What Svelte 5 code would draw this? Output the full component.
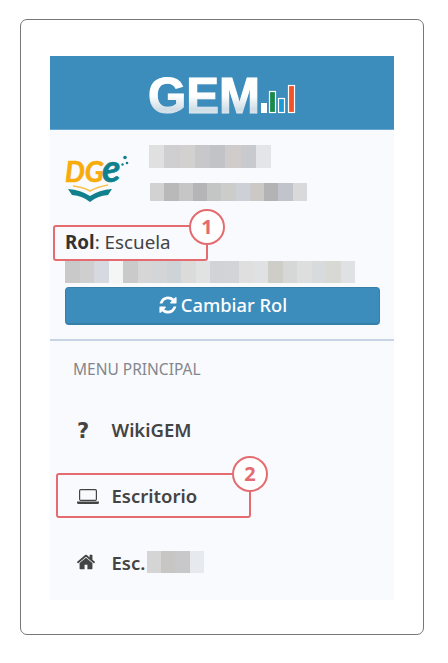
<script lang="ts">
  const nameBlocks = ['#e0e0e0', '#cfcfd1', '#d3d0d0', '#c8c8ca', '#c2c3c7', '#d0cccb', '#c9cacd', '#e4e5e9'];
  const mailBlocks = ['#d2d2d2', '#b9b9b9', '#c6c6c6', '#b5b5b8', '#c4c6c5', '#cccccb', '#cdd0d6', '#cbc9c5', '#b3b2b4', '#c2c4cc', '#d9d9db'];
  const schoolBlocks = ['#c9c9c9', '#cfcfcf', '#d6dae0', '#f4f5f5', '#c9cac9', '#d6d6d6', '#d3d5d6', '#cdd3d6', '#dbdcda', '#e1e2e2', '#d2d3d6', '#d3d4d8', '#dfdfe0', '#e0e1e2', '#cfcdc8', '#d6d8d8', '#dddfdf', '#d8dbdb', '#d8d8d4', '#e0e1e3'];
  const escBlocks = ['#d5d5d5', '#c8c5c5', '#c8c8ca', '#e6e9ed'];
</script>

{#snippet mosaic(blocks: string[], cls: string)}
  <div class="mosaic {cls}" aria-hidden="true">
    {#each blocks as color}
      <span style="background:{color}"></span>
    {/each}
  </div>
{/snippet}

<div class="frame">
  <aside class="panel">
    <header class="brand">
      <svg width="150" height="50" viewBox="0 0 150 50" role="img" aria-label="GEM">
        <defs>
          <linearGradient id="gem" x1="0" y1="0" x2="0" y2="1">
            <stop offset="0" stop-color="#ffffff" />
            <stop offset="0.5" stop-color="#ffffff" />
            <stop offset="0.75" stop-color="#cfdde6" />
            <stop offset="1" stop-color="#f6f9fb" />
          </linearGradient>
        </defs>
        <text x="1" y="42.500" class="gem" fill="url(#gem)" stroke="url(#gem)" stroke-width="1.200" textLength="112" lengthAdjust="spacingAndGlyphs">GEM</text>
        <rect x="114" y="33" width="6" height="10" fill="#fff" />
        <rect x="122.500" y="21.500" width="6" height="21" fill="#1a8a4a" stroke="#fff" stroke-width="1.200" />
        <rect x="131.500" y="28.500" width="6" height="14" fill="#1b9ad6" stroke="#fff" stroke-width="1.200" />
        <rect x="141.500" y="15.500" width="6" height="27" fill="#f0522a" stroke="#fff" stroke-width="1.200" />
      </svg>
    </header>

    <section class="user">
      <div class="identity">
        <svg class="dge" width="64" height="52" viewBox="0 0 64 52" role="img" aria-label="DGE">
          <text x="0" y="27" class="dge-text" fill="#f7ac0c" stroke="#f7ac0c" stroke-width="0.6">DG</text>
          <text x="37" y="27" class="dge-e" fill="#10808c" stroke="#10808c" stroke-width="0.6">e</text>
          <circle cx="60" cy="2.500" r="1.800" fill="#10808c" />
          <circle cx="62" cy="8" r="1.300" fill="#10808c" />
          <circle cx="57.500" cy="9.500" r="1.200" fill="#10808c" />
          <path d="M8 31 Q18 32 25 36 Q32 32 43 30" fill="none" stroke="#f7c14a" stroke-width="1.600" />
          <path d="M3 34 Q16 35 25 41 Q34 35 47 34 L43 40 Q32 41 25 47 Q18 41 7 40 Z" fill="#10808c" />
        </svg>
        <div class="names">
          {@render mosaic(nameBlocks, 'name')}
          {@render mosaic(mailBlocks, 'mail')}
        </div>
      </div>

      <div class="role">
        <b>Rol</b>: Escuela
        <span class="callout role-callout"></span>
        <span class="badge role-badge">1</span>
      </div>
      {@render mosaic(schoolBlocks, 'school')}

      <button type="button" class="switch">
        <svg width="20" height="20" viewBox="0 0 1792 1792" aria-hidden="true">
          <path fill="currentColor" d="M1639 1056q0 5-1 7-64 268-268 434.5t-478 166.5q-146 0-282.5-55t-243.5-157l-129 129q-19 19-45 19t-45-19-19-45v-448q0-26 19-45t45-19h448q26 0 45 19t19 45-19 45l-137 137q71 66 161 102t187 36q134 0 250-65t186-179q11-17 53-117 8-23 30-23h192q13 0 22.5 9.5t9.5 22.5zm25-800v448q0 26-19 45t-45 19h-448q-26 0-45-19t-19-45 19-45l138-138q-148-137-349-137-134 0-250 65t-186 179q-11 17-53 117-8 23-30 23h-199q-13 0-22.5-9.5t-9.5-22.5v-7q65-268 270-434.5t480-166.5q146 0 284 55.5t245 156.5l130-129q19-19 45-19t45 19 19 45z" />
        </svg>
        Cambiar Rol
      </button>
    </section>

    <nav class="menu">
      <div class="menu-title">MENU PRINCIPAL</div>
      <div class="item">
        <span class="icon question">?</span>
        <span>WikiGEM</span>
      </div>
      <div class="item">
        <span class="icon">
          <svg width="24" height="18" viewBox="0 0 24 18" aria-hidden="true">
            <rect x="3.600" y="2.600" width="16.800" height="10.800" rx="1.200" fill="none" stroke="currentColor" stroke-width="1.200" />
            <path fill="currentColor" d="M1 14.500h22v1.200q0 1.300-1.600 1.300H2.600Q1 17 1 15.700z" />
          </svg>
        </span>
        <span>Escritorio</span>
        <span class="callout desk-callout"></span>
        <span class="badge desk-badge">2</span>
      </div>
      <div class="item">
        <span class="icon">
          <svg width="20" height="20" viewBox="0 0 1792 1792" aria-hidden="true">
            <path fill="currentColor" d="M1472 992v480q0 26-19 45t-45 19h-384v-384h-256v384h-384q-26 0-45-19t-19-45v-480q0-1 .5-3t.5-3l575-474 575 474q1 2 1 6zm223-69l-62 74q-8 9-21 11h-3q-13 0-21-7l-692-577-692 577q-12 8-24 7-13-2-21-11l-62-74q-8-10-7-23.5t11-21.5l719-599q32-26 76-26t76 26l244 204v-195q0-14 9-23t23-9h192q14 0 23 9t9 23v408l219 182q10 8 11 21.5t-7 23.5z" />
          </svg>
        </span>
        <span>Esc.</span>
        {@render mosaic(escBlocks, 'esc')}
      </div>
    </nav>
  </aside>
</div>

<style>
  :global(body) {
    background: #fff;
    font-family: "Noto Sans", "Open Sans", sans-serif;
    color: #444;
  }
  .frame {
    box-sizing: border-box;
    width: 404px;
    height: 616px;
    margin: 19px 0 0 20px;
    padding: 36px 29px 0;
    border: 1px solid #777;
    border-radius: 7px;
  }
  .panel {
    width: 344px;
    height: 544px;
    background: #f9fafd;
  }
  .brand {
    box-sizing: border-box;
    height: 74px;
    display: flex;
    justify-content: center;
    align-items: flex-start;
    background: #3c8dbc;
    border-bottom: 1px solid #68a7d0;
  }
  .brand svg {
    margin-top: 14px;
    overflow: visible;
  }
  .gem {
    font: 700 50px "Liberation Sans", sans-serif;
  }
  .user {
    padding: 19px 14px 0 15px;
    height: 211px;
    box-sizing: border-box;
    border-bottom: 2px solid #c7d4e4;
  }
  .identity {
    display: flex;
    height: 57px;
  }
  .dge {
    margin-top: 6px;
    flex: none;
    overflow: visible;
  }
  .dge-text {
    font: 700 italic 28px "Lato", sans-serif;
  }
  .dge-e {
    font: 700 italic 38px "Lato", sans-serif;
  }
  .names {
    margin-left: 20px;
    flex: 1;
  }
  .mosaic {
    display: flex;
  }
  .mosaic span {
    flex: 1;
  }
  .name {
    width: 122px;
    height: 23px;
    margin-top: -4px;
  }
  .mail {
    width: 157px;
    height: 18px;
    margin: 15px 0 0 1px;
  }
  .role {
    position: relative;
    height: 30px;
    margin-top: 22px;
    line-height: 28px;
    font-size: 18.800px;
  }
  .role b {
    color: #333;
  }
  .school {
    width: 290px;
    height: 22px;
    margin-top: 3px;
  }
  .switch {
    width: 315px;
    height: 38px;
    margin-top: 4px;
    padding: 0 0 2px;
    display: flex;
    align-items: center;
    justify-content: center;
    gap: 3px;
    background: #3c8dbc;
    border: 1px solid #367fa9;
    border-bottom-width: 2px;
    border-radius: 4px;
    color: #fff;
    font: 500 18.300px "Noto Sans", sans-serif;
  }
  .menu-title {
    padding: 17px 0 0 23px;
    height: 56px;
    box-sizing: border-box;
    font-size: 15.500px;
    line-height: 22px;
    color: #83878c;
  }
  .item {
    position: relative;
    box-sizing: border-box;
    display: flex;
    align-items: center;
    height: 66.500px;
    padding: 0 0 2px 26px;
    font-size: 18.500px;
    font-weight: 600;
    color: #444;
  }
  .icon {
    width: 35.500px;
    display: flex;
    align-items: center;
    flex: none;
  }
  .question {
    box-sizing: border-box;
    font: 700 21px "DejaVu Sans", sans-serif;
    padding: 3px 0 0 1px;
  }
  .esc {
    width: 57px;
    height: 22px;
    margin-left: 1.500px;
  }
  .callout {
    position: absolute;
    box-sizing: border-box;
    border: 2px solid #e46c70;
    border-radius: 3px;
  }
  .badge {
    position: absolute;
    box-sizing: border-box;
    width: 36px;
    height: 36px;
    border: 2px solid #e46c70;
    border-radius: 50%;
    background: #fff;
    color: #e46c70;
    font: 700 20px/32px "Noto Sans", sans-serif;
    text-align: center;
  }
  .role-callout {
    left: -12px;
    top: -3px;
    width: 155px;
    height: 36px;
  }
  .role-badge {
    left: 124px;
    top: -19px;
  }
  .desk-callout {
    left: 6px;
    top: 9px;
    width: 195px;
    height: 45px;
  }
  .desk-badge {
    left: 182px;
    top: -8px;
  }
</style>
